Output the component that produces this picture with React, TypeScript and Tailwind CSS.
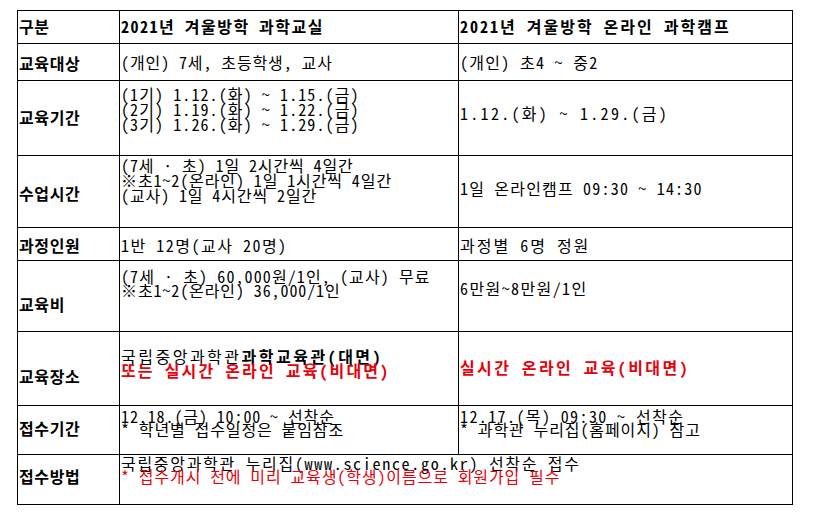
import type { ReactNode } from "react";

const mono = { fontFamily: '"Noto Sans Mono CJK KR", "Noto Sans CJK KR", monospace' };
const sans = { fontFamily: '"Noto Sans CJK KR", "Noto Sans", sans-serif' };

type CellProps = {
  className?: string;
  children: ReactNode;
};

// one table cell: right + bottom border, text placed with per-cell padding
const Cell = ({ className = "", children }: CellProps) => (
  <div className={`border-r border-b border-black pl-px ${className}`}>{children}</div>
);

const Label = ({ className = "", children }: CellProps) => (
  <div
    className={`border-r border-b border-black pl-px text-[16px] font-bold leading-[16px] tracking-[0.6px] ${className}`}
    style={sans}
  >
    {children}
  </div>
);

const Head = ({ className = "", children }: CellProps) => (
  <div className={`border-r border-b border-black pt-[7px] pl-px text-[16px] font-bold leading-[16px] ${className}`}>
    {children}
  </div>
);

const App = () => {
  return (
    <div className="h-[519px] w-[819px] bg-white pt-[10px] pl-[17px] text-black" style={mono}>
      <div className="grid w-[776px] grid-cols-[102px_339px_334px] grid-rows-[33px_37px_75px_72px_33px_71px_74px_49px_50px] border-t border-l border-black text-[16px] tracking-[0.9px]">
        {/* header */}
        <Label className="pt-[7px]">구분</Label>
        <Head className="tracking-[1.5px]">2021년 겨울방학 과학교실</Head>
        <Head className="tracking-[2px]">2021년 겨울방학 온라인 과학캠프</Head>

        {/* 교육대상 */}
        <Label className="pt-[11px]">교육대상</Label>
        <Cell className="pt-[10px] leading-[16px]">(개인) 7세, 초등학생, 교사</Cell>
        <Cell className="pt-[10px] leading-[16px] tracking-[1.3px]">(개인) 초4 ~ 중2</Cell>

        {/* 교육기간 */}
        <Label className="pt-[28px]">교육기간</Label>
        <Cell className="pt-[6px] leading-[15px] tracking-[1.1px]">
          <div>(1기) 1.12.(화) ~ 1.15.(금)</div>
          <div>(2기) 1.19.(화) ~ 1.22.(금)</div>
          <div>(3기) 1.26.(화) ~ 1.29.(금)</div>
        </Cell>
        <Cell className="pt-[24px] leading-[16px] tracking-[2.3px]">1.12.(화) ~ 1.29.(금)</Cell>

        {/* 수업시간 */}
        <Label className="pt-[29px]">수업시간</Label>
        <Cell className="pt-[2px] leading-[15px]">
          <div>(7세 · 초) 1일 2시간씩 4일간</div>
          <div>※초1~2(온라인) 1일 1시간씩 4일간</div>
          <div>(교사) 1일 4시간씩 2일간</div>
        </Cell>
        <Cell className="pt-[24px] leading-[16px] tracking-[1.2px]">1일 온라인캠프 09:30 ~ 14:30</Cell>

        {/* 과정인원 */}
        <Label className="pt-[9px]">과정인원</Label>
        <Cell className="pt-[9px] leading-[16px] tracking-[1.5px]">1반 12명(교사 20명)</Cell>
        <Cell className="pt-[9px] leading-[16px] tracking-[2px]">과정별 6명 정원</Cell>

        {/* 교육비 */}
        <Label className="pt-[35px]">교육비</Label>
        <Cell className="pt-[8px] leading-[14px]">
          <div className="tracking-[1.1px]">(7세 · 초) 60,000원/1인, (교사) 무료</div>
          <div>※초1~2(온라인) 36,000/1인</div>
        </Cell>
        <Cell className="pt-[19px] leading-[16px] tracking-[1.4px]">6만원~8만원/1인</Cell>

        {/* 교육장소 */}
        <Label className="pt-[36px]">교육장소</Label>
        <Cell className="pt-[17px] leading-[14px]">
          <div className="tracking-[2.5px]">
            국립중앙과학관<span className="font-bold">과학교육관(대면)</span>
          </div>
          <div className="font-bold tracking-[2.1px] text-[#e8000b]">또는 실시간 온라인 교육(비대면)</div>
        </Cell>
        <Cell className="pt-[27px] leading-[16px] font-bold tracking-[2.4px] text-[#e8000b]">실시간 온라인 교육(비대면)</Cell>

        {/* 접수기간 */}
        <Label className="pt-[14px]">접수기간</Label>
        <Cell className="pt-[4px] leading-[13px]">
          <div>12.18.(금) 10:00 ~ 선착순</div>
          <div>* 학년별 접수일정은 붙임참조</div>
        </Cell>
        <Cell className="pt-[4px] leading-[13px]">
          <div className="tracking-[1.4px]">12.17.(목) 09:30 ~ 선착순</div>
          <div>* 과학관 누리집(홈페이지) 참고</div>
        </Cell>

        {/* 접수방법 */}
        <Label className="pt-[13px]">접수방법</Label>
        <Cell className="col-span-2 pt-[2px] leading-[13px]">
          <div className="tracking-[1.7px]">국립중앙과학관 누리집(www.science.go.kr) 선착순 접수</div>
          <div className="text-[#e8000b]">* 접수개시 전에 미리 교육생(학생)이름으로 회원가입 필수</div>
        </Cell>
      </div>
    </div>
  );
};

export default App;
